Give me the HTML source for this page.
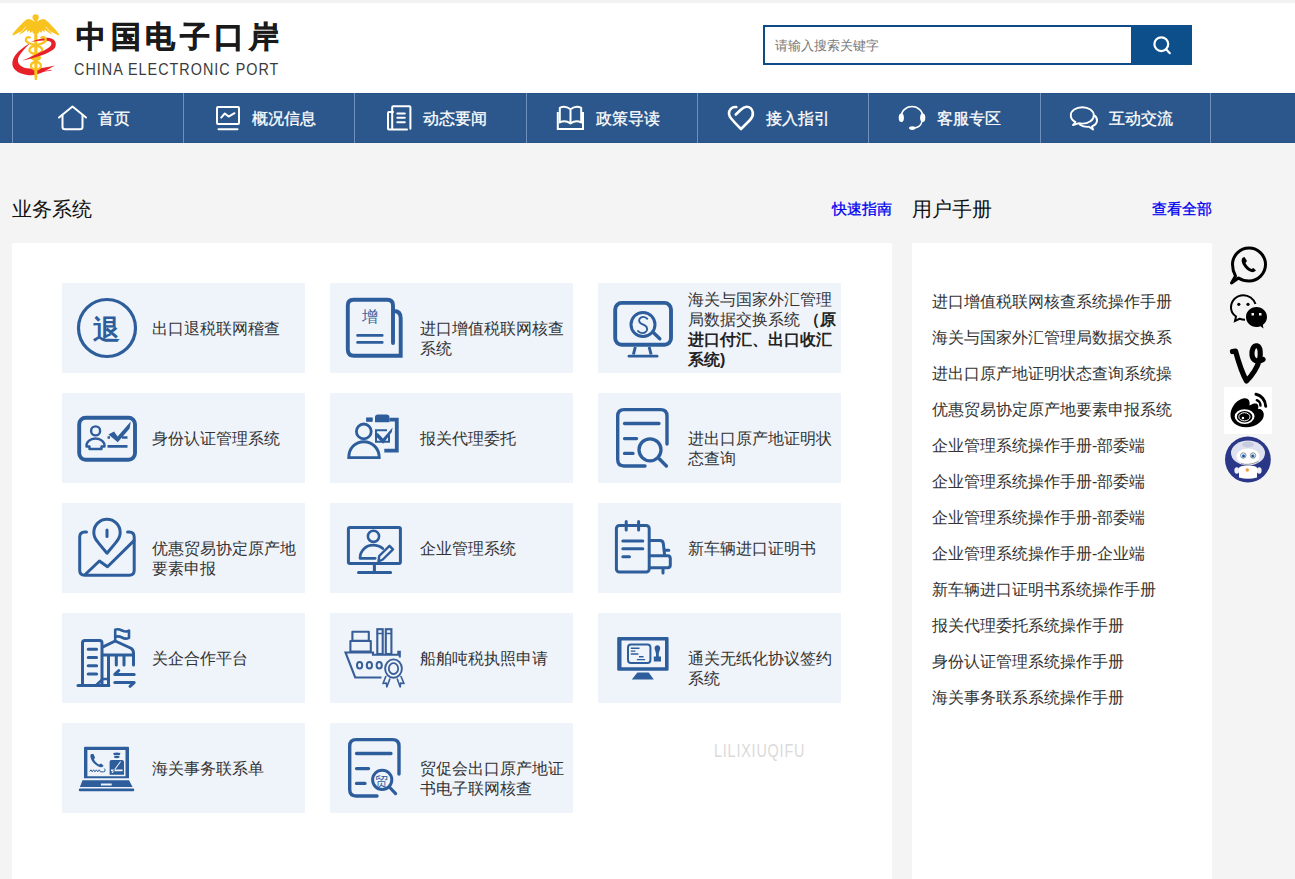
<!DOCTYPE html>
<html><head><meta charset="utf-8">
<style>
*{margin:0;padding:0;box-sizing:border-box}
html,body{width:1295px;height:879px;overflow:hidden;background:#f4f4f4;font-family:"Liberation Sans",sans-serif}
#top{position:absolute;left:0;top:0;width:1295px;height:3px;background:#f2f2f2}
#hdr{position:absolute;left:0;top:3px;width:1295px;height:90px;background:#fff}
#ltitle{position:absolute;left:76px;top:17px;font-size:30px;font-weight:bold;color:#1a1a1a;letter-spacing:4.6px;line-height:40px;white-space:nowrap;-webkit-text-stroke:0.6px #1a1a1a}
#lsub{position:absolute;left:74px;top:60px;font-size:17px;color:#3a3a3a;letter-spacing:1.2px;line-height:20px;white-space:nowrap;transform-origin:0 0;transform:scaleX(0.845)}
#search{position:absolute;left:763px;top:25px;width:429px;height:40px;border:2px solid #0d4a87;background:#fff}
#search span{position:absolute;left:10px;top:11px;font-size:13px;color:#777;line-height:16px}
#sbtn{position:absolute;left:1131px;top:25px;width:61px;height:40px;background:#0d4f8b}
#nav{position:absolute;left:0;top:93px;width:1295px;height:50px;background:#2c578c;border-top:1px solid #24508a;border-bottom:1px solid #285389}
.ni{position:absolute;top:-1px;height:50px;width:171px;border-left:1px solid #7090bb}
.nt{position:absolute;top:109px;font-size:16px;color:#fff;line-height:20px;white-space:nowrap;-webkit-text-stroke:0.3px #fff}
.h2{position:absolute;font-size:20px;color:#111;line-height:24px;white-space:nowrap}
.lnk{position:absolute;font-size:15px;color:#0000f0;line-height:18px;white-space:nowrap;-webkit-text-stroke:0.3px #0000f0}
#pl{position:absolute;left:12px;top:243px;width:880px;height:640px;background:#fff}
#pr{position:absolute;left:912px;top:243px;width:300px;height:640px;background:#fff}
.card{position:absolute;width:243px;height:90px;background:#eff4fb}
.card .t{position:absolute;left:90px;width:152px;font-size:16px;color:#333;line-height:20px}
.card b{color:#222}
.mi{position:absolute;left:932px;width:240px;overflow:hidden;font-size:16px;color:#333;line-height:20px;white-space:nowrap}
#wm{position:absolute;left:714px;top:741px;font-size:18px;letter-spacing:1px;color:#dadada;line-height:20px;white-space:nowrap;transform-origin:0 0;transform:scaleX(0.8)}
#ic{position:absolute;left:0;top:0}
</style></head><body>
<div id="top"></div>
<div id="hdr"></div>
<div id="ltitle">中国电子口岸</div>
<div id="lsub">CHINA ELECTRONIC PORT</div>
<div id="search"><span>请输入搜索关键字</span></div>
<div id="sbtn"></div>
<div id="nav">
  <div class="ni" style="left:12px"></div>
  <div class="ni" style="left:183px"></div>
  <div class="ni" style="left:354px"></div>
  <div class="ni" style="left:526px"></div>
  <div class="ni" style="left:697px"></div>
  <div class="ni" style="left:868px"></div>
  <div class="ni" style="left:1040px"></div>
  <div class="ni" style="left:1210px;width:85px"></div>
</div>
<div class="nt" style="left:98px">首页</div>
<div class="nt" style="left:252px">概况信息</div>
<div class="nt" style="left:423px">动态要闻</div>
<div class="nt" style="left:596px">政策导读</div>
<div class="nt" style="left:766px">接入指引</div>
<div class="nt" style="left:937px">客服专区</div>
<div class="nt" style="left:1109px">互动交流</div>
<div class="h2" style="left:12px;top:197px">业务系统</div>
<div class="lnk" style="left:832px;top:200px">快速指南</div>
<div class="h2" style="left:912px;top:197px">用户手册</div>
<div class="lnk" style="left:1152px;top:200px">查看全部</div>
<div id="pl"></div>
<div id="pr"></div>
<div class="card" style="left:62px;top:283px"><div class="t" style="top:36px">出口退税联网稽查</div></div>
<div class="card" style="left:330px;top:283px"><div class="t" style="top:36px">进口增值税联网核查系统</div></div>
<div class="card" style="left:598px;top:283px"><div class="t" style="top:7px">海关与国家外汇管理局数据交换系统 <b>（原进口付汇、出口收汇系统)</b></div></div>
<div class="card" style="left:62px;top:393px"><div class="t" style="top:36px">身份认证管理系统</div></div>
<div class="card" style="left:330px;top:393px"><div class="t" style="top:36px">报关代理委托</div></div>
<div class="card" style="left:598px;top:393px"><div class="t" style="top:36px">进出口原产地证明状态查询</div></div>
<div class="card" style="left:62px;top:503px"><div class="t" style="top:36px">优惠贸易协定原产地要素申报</div></div>
<div class="card" style="left:330px;top:503px"><div class="t" style="top:36px">企业管理系统</div></div>
<div class="card" style="left:598px;top:503px"><div class="t" style="top:36px">新车辆进口证明书</div></div>
<div class="card" style="left:62px;top:613px"><div class="t" style="top:36px">关企合作平台</div></div>
<div class="card" style="left:330px;top:613px"><div class="t" style="top:36px">船舶吨税执照申请</div></div>
<div class="card" style="left:598px;top:613px"><div class="t" style="top:36px">通关无纸化协议签约系统</div></div>
<div class="card" style="left:62px;top:723px"><div class="t" style="top:36px">海关事务联系单</div></div>
<div class="card" style="left:330px;top:723px"><div class="t" style="top:36px">贸促会出口原产地证书电子联网核查</div></div>

<div class="mi" style="top:292px">进口增值税联网核查系统操作手册</div>
<div class="mi" style="top:328px">海关与国家外汇管理局数据交换系统操作手册</div>
<div class="mi" style="top:364px">进出口原产地证明状态查询系统操作手册</div>
<div class="mi" style="top:400px">优惠贸易协定原产地要素申报系统操作手册</div>
<div class="mi" style="top:436px">企业管理系统操作手册-部委端</div>
<div class="mi" style="top:472px">企业管理系统操作手册-部委端</div>
<div class="mi" style="top:508px">企业管理系统操作手册-部委端</div>
<div class="mi" style="top:544px">企业管理系统操作手册-企业端</div>
<div class="mi" style="top:580px">新车辆进口证明书系统操作手册</div>
<div class="mi" style="top:616px">报关代理委托系统操作手册</div>
<div class="mi" style="top:652px">身份认证管理系统操作手册</div>
<div class="mi" style="top:688px">海关事务联系系统操作手册</div>

<div id="wm">LILIXIUQIFU</div>
<svg id="ic" width="1295" height="879" viewBox="0 0 1295 879">
<!-- logo -->
<g transform="translate(5,10)">
  <path fill="#e8202a" d="M25 33.3 C17 38 8.8 44 7.4 52 C6.6 58.5 12 64 24 65.2 C34 65.8 42 59.5 50 55.4 C41 57.6 32 59.2 24.5 58.6 C16.5 58 12.8 54.5 12.9 50 C13.2 45.5 19 39.5 25 33.3 Z"/>
  <path fill="none" stroke="#e8202a" stroke-width="0.8" d="M27 62.6 C35 61.8 42 60.8 46.5 60.2"/>
  <g fill="#f9c31f">
    <circle cx="30.6" cy="7.4" r="3.1"/>
    <path d="M30.8 13 C29 11.2 26 8.8 23.2 9 C21 9.3 19.5 11 17 13.5 C13 17.5 9.5 21.5 7.3 24.4 C7.2 25.2 8 25.4 9 24.9 C12 23.6 14 22.6 15.6 21.6 C14.6 23 14.3 24 14.9 24.5 C17 23.6 20 21.2 22.2 19.6 L22 22.3 L24.6 20.2 L25 23 L27.4 21.2 L28 23.6 L30.8 23.6 Z"/>
    <path transform="translate(61.6,0) scale(-1,1)" d="M30.8 13 C29 11.2 26 8.8 23.2 9 C21 9.3 19.5 11 17 13.5 C13 17.5 9.5 21.5 7.3 24.4 C7.2 25.2 8 25.4 9 24.9 C12 23.6 14 22.6 15.6 21.6 C14.6 23 14.3 24 14.9 24.5 C17 23.6 20 21.2 22.2 19.6 L22 22.3 L24.6 20.2 L25 23 L27.4 21.2 L28 23.6 L30.8 23.6 Z"/>
    <path d="M29.3 10 H32.4 V66 L31.9 70 H29.8 L29.3 66 Z"/>
    <ellipse cx="30.8" cy="47.8" rx="5.3" ry="3.2"/>
  </g>
  <path fill="none" stroke="#fff" stroke-width="0.7" d="M20.8 16.9 L14.4 24.2 M40.8 16.9 L47.2 24.2"/>
  <g fill="none" stroke="#f9c31f" stroke-width="2.3">
    <path d="M25.4 28.3 C24.6 26.7 21.8 26.7 21 28.8 C20.3 30.8 22 32.6 25 33.5 L30.8 35.3 L36.6 33.5 C39.6 32.6 41.3 30.8 40.6 28.8 C39.8 26.7 37 26.7 36.2 28.3"/>
    <ellipse cx="30.8" cy="39.9" rx="6.4" ry="4"/>
    <ellipse cx="30.9" cy="55.7" rx="5" ry="3.7"/>
  </g>
  <path fill="#e8202a" d="M17 50.7 C28 48.2 40.5 45 47.6 40 C52 37.2 52.2 30.4 46.4 28.4 C40.6 26.6 32 29.4 25.5 32.3 C32 30.6 39.5 29.8 44 31 C47 31.9 47.2 34.6 44.6 37 C38 41.5 28 46 17 50.7 Z"/>
  <path fill="none" stroke="#f9c31f" stroke-width="2.3" d="M36.2 28.3 C37 26.7 39.8 26.7 40.6 28.8 C41.3 30.8 39.6 32.6 36.6 33.5"/>
</g>
<!-- search icon -->
<g fill="none" stroke="#fff" stroke-width="2.2" stroke-linecap="round">
  <circle cx="1161.3" cy="44.2" r="6.9"/>
  <path d="M1166.3 49.6 L1169.8 53.2"/>
</g>
<!-- nav icons -->
<g fill="none" stroke="#fff" stroke-width="2" stroke-linecap="round" stroke-linejoin="round">
  <path d="M59 117.5 L72.5 106.5 L86 117.5"/>
  <path d="M62.5 115 V127 Q62.5 129.3 65 129.3 H80 Q82.5 129.3 82.5 127 V115"/>
  <rect x="217" y="107" width="22" height="17" rx="1"/>
  <path d="M218.5 129.3 H237.5"/>
  <path d="M221.2 117.6 L224.8 113.5 L228.6 116.6 L234.5 113.2"/>
  <path d="M392.2 128.5 V107.2 Q392.2 106.2 393.2 106.2 H409.4 Q410.4 106.2 410.4 107.2 V128.8"/>
  <path d="M393 112 H389 Q388 112 388 113 V128.5 Q388 129.5 389 129.5 H407"/>
  <path d="M397.3 113.6 H404.8 M397.3 117.8 H404.8 M397.3 122.3 H404.8"/>
  <path d="M557.8 112 V129 H583 V112" stroke-linecap="butt" stroke-linejoin="miter"/>
  <path d="M570.5 109.3 Q565 105 559.8 107.8 V122.5 Q565 119.5 570.5 123.5 Q576 119.5 581.2 122.5 V107.8 Q576 105 570.5 109.3 V123.5"/>
  <path d="M736.3 107 C731.5 106.5 728.8 110 729 113.8 C729.3 117 731.5 119.5 741 129 L750 120 C752.5 117.5 753.2 115.5 752.8 112.5 C752.3 109 749.5 106.8 746.8 106.8 C744.3 106.8 742.5 108 740.5 110 L735.8 114.5" stroke-width="2.6"/>
  <path d="M901 118 C901 111 906 106.5 912 106.5 C918 106.5 923 111 923 118" stroke-width="1.6"/>
  <path d="M922 121.5 C921 125 918.5 127.5 914.5 128" stroke-width="1.4"/>
  <path d="M1082.3 107.2 C1076 107.2 1070.8 110.8 1070.8 115.2 C1070.8 118 1072.5 120.5 1075.5 122 L1073 125 L1078.5 123.3 C1079.7 123.5 1081 123.6 1082.3 123.6 C1088.6 123.6 1093.8 120 1093.8 115.4 C1093.8 110.8 1088.6 107.2 1082.3 107.2 Z" stroke-width="1.9"/>
  <path d="M1094.5 115.5 C1096.5 117 1097.3 119 1097 121 C1096.6 123.5 1094.5 125.5 1092 126.3 L1093 129.5 L1089 126.8 C1086 127 1082.5 126.5 1080 124.7" stroke-width="1.9"/>
</g>
<g fill="#fff">
  <ellipse cx="901.3" cy="117.8" rx="2.6" ry="4.3"/>
  <ellipse cx="922.7" cy="117.8" rx="2.6" ry="4.3"/>
  <ellipse cx="912.3" cy="128.1" rx="3.3" ry="1.8"/>
</g>
<!-- cards -->
<g fill="none" stroke="#2e5d9c" stroke-linecap="round" stroke-linejoin="round">
  <g transform="translate(62,283)">
    <circle cx="45" cy="45" r="28.5" stroke-width="3.2"/>
  </g>
  <g transform="translate(330,283)">
    <path d="M63 60 V22.5 Q63 16.8 57.3 16.8 H23.5 Q17.8 16.8 17.8 22.5 V66.5 Q17.8 72.7 24 72.7 H70.7 V35 Q70.7 28.5 64.5 28" stroke-width="3.9" stroke-linejoin="miter"/>
    <path d="M27.5 52.4 H52.3 M27.5 59.4 H52.3" stroke-width="2.6"/>
  </g>
  <g transform="translate(598,283)">
    <rect x="17.2" y="19.9" width="55.8" height="41.8" rx="6.5" stroke-width="3.9"/>
    <path d="M37.3 64 L35.4 71.5 M51.2 64 L53.1 71.5" stroke-width="3" stroke-linecap="butt"/>
    <path d="M31 73.2 H59" stroke-width="2.8"/>
    <circle cx="45" cy="41.5" r="12" stroke-width="3"/>
    <path d="M55.3 49.5 L61.8 55.8" stroke-width="3.4"/>
  </g>
  <g transform="translate(62,393)">
    <rect x="17.2" y="24.7" width="55.8" height="42.1" rx="6.5" stroke-width="3.9"/>
    <circle cx="33.6" cy="37.9" r="4.5" stroke-width="2.4"/>
    <path d="M27.5 56 V53.5 H24.5 C24 49 28 45.5 33.5 45.5 C39 45.5 43 49 42.5 53.5 H39.5 V56 Z" stroke-width="2.4"/>
    <path d="M45.5 44.5 H48 M60 44.5 H65.5 M45.5 53.4 H65.5" stroke-width="2.6" stroke-linecap="butt"/>
  </g>
  <g transform="translate(330,393)">
    <circle cx="33.8" cy="38.4" r="7.4" stroke-width="2.8"/>
    <path d="M18.8 64.6 C18.8 55 25.5 48.8 33.8 48.8 C42.1 48.8 49.2 55 49.2 64.6 Z" stroke-width="2.9" stroke-linejoin="miter"/>
    <path d="M57 37.3 H46 V48.7 H59 V42" stroke-width="2" stroke-linecap="butt" stroke-linejoin="miter"/>
    <path d="M42.5 26.6 H36.3 M59.4 26.6 H66.8 V57.6 H54.3" stroke-width="3.8" stroke-linecap="butt" stroke-linejoin="miter"/>
  </g>
  <g transform="translate(598,393)">
    <path d="M69 51 V23 Q69 16.6 62.6 16.6 H26 Q19.7 16.6 19.7 23 V66.6 Q19.7 73 26 73 H47" stroke-width="3.4"/>
    <path d="M26.5 30.5 H61 M26.5 45.6 H38.6 M26.5 60.4 H35" stroke-width="3.3"/>
    <circle cx="52" cy="56.8" r="11" stroke-width="3.3"/>
    <path d="M61.2 65.8 L68.4 73" stroke-width="3.4"/>
  </g>
  <g transform="translate(62,503)">
    <path d="M24.5 29 H22.7 Q17.7 29 17.7 34 V67.2 Q17.7 72.2 22.7 72.2 H67.2 Q72.2 72.2 72.2 67.2 V34 Q72.2 29 67.2 29 H65.6" stroke-width="3"/>
    <path d="M45 50.2 L36.2 39.6 C33.5 36.5 31.8 33.5 31.8 29.5 C31.8 22.2 37.7 16.3 45 16.3 C52.3 16.3 58.2 22.2 58.2 29.5 C58.2 33.5 56.5 36.5 53.8 39.6 Z" stroke-width="3"/>
    <path d="M45 27 V33.5" stroke-width="3"/>
    <path d="M23.2 71.5 L37.4 58 L45.5 63.8 L72 37.6" stroke-width="3"/>
  </g>
  <g transform="translate(330,503)">
    <rect x="18.4" y="24.5" width="52" height="36" rx="1.5" stroke-width="3"/>
    <path d="M44.4 62 V69.6 M28.5 69.6 H60.6" stroke-width="3"/>
    <circle cx="43.5" cy="33.3" r="5.6" stroke-width="2.6"/>
    <path d="M45.2 55.3 H30 C30 47.8 35.8 42.2 43 42.2 C47 42.2 50.5 43.6 52.8 45.6" stroke-width="2.7"/>
    <path d="M48.5 58.5 L49.2 53 L59.5 42.8 L63 46.3 L52.8 56.5 Z" stroke-width="2.4"/>
  </g>
  <g transform="translate(598,503)">
    <rect x="18.4" y="22.5" width="32.8" height="46.6" rx="3" stroke-width="3"/>
    <path d="M28.2 18.5 V27 M40.6 18.5 V27" stroke-width="3"/>
    <path d="M24.8 37.9 H44.8 M24.8 45.8 H44.8 M24.8 53.8 H31.5" stroke-width="3"/>
    <path d="M51.5 37.6 H62 Q64.8 37.6 65.3 40.5 L66.6 51.8" stroke-width="3"/>
    <path d="M51.5 52.8 H69.5 Q72.3 52.8 72.3 55.6 V62 Q72.3 64.8 69.5 64.8 H51.5" stroke-width="3"/>
    <path d="M67.2 47.2 H70.8 M65 65.5 V70" stroke-width="3"/>
  </g>
  <g transform="translate(62,613)">
    <path d="M20.5 72.5 V30 Q20.5 27.6 23 27.6 H37.5 Q40 27.6 40 30 V72.5" stroke-width="3"/>
    <path d="M16 72.5 H46.8" stroke-width="3"/>
    <path d="M26.2 36.3 H34.6 M26.2 44.5 H34.6 M26.2 52.7 H34.6 M26.2 60.9 H34.6" stroke-width="3"/>
    <path d="M41 33.8 L53.2 28 L68.5 35 Q71.5 36.5 71.5 40 V52" stroke-width="3"/>
    <path d="M41 42 H70.5 M46.5 42 V72.5 M54.3 43 V52 M62 43 V52" stroke-width="3"/>
    <path d="M34.3 72 L40.8 66 H46" stroke-width="2.5"/>
    <path d="M53.2 28 V16.6 Q56 15.5 60 17.5 Q64 19.5 67 17.5 V24.8 Q63.5 26.5 60 24.5 Q56 22.5 53.2 24" stroke-width="2.6"/>
    <path d="M72.2 61.4 H52.8 L56.8 57.5 M52.8 69.6 H72.2 L68 73.3" stroke-width="3"/>
  </g>
  <g transform="translate(330,613)" stroke="#385e98">
    <path d="M51.5 64.5 H25.2 L15.5 39.5 H43 V41.8 H68.3 V38.8 H69.8 V44.5" stroke-width="2.1" stroke-linecap="butt" stroke-linejoin="miter"/>
    <rect x="20.4" y="28" width="20.4" height="10.6" stroke-width="2.1"/>
    <rect x="22.4" y="18.7" width="16.4" height="9" stroke-width="2.1"/>
    <rect x="47.3" y="16.2" width="5.4" height="24.8" stroke-width="2.1" stroke-linejoin="miter"/>
    <rect x="55.8" y="16.2" width="5.6" height="24.8" stroke-width="2.1" stroke-linejoin="miter"/>
    <path d="M47.3 20.5 H52.7 M55.8 20.5 H61.4" stroke-width="1.6"/>
    <ellipse cx="29.6" cy="52.2" rx="2.6" ry="3.3" stroke-width="2"/>
    <ellipse cx="39.4" cy="52.2" rx="2.6" ry="3.3" stroke-width="2"/>
    <ellipse cx="49.2" cy="52.2" rx="2.6" ry="3.3" stroke-width="2"/>
    <ellipse cx="63.5" cy="55.6" rx="8.4" ry="9.2" stroke-width="1.9"/>
    <ellipse cx="63.5" cy="55.6" rx="4.7" ry="5.4" stroke-width="1.8"/>
    <path d="M55.8 63.5 L53 70.5 L56.3 70 L56.8 74 L59.8 66" stroke-width="1.6"/>
    <path d="M71 63.5 L74 70.5 L70.7 70 L70.2 74 L67.3 66" stroke-width="1.6"/>
  </g>
</g>
<g fill="#2e5d9c">
  <text x="106.5" y="339" font-size="27" font-weight="bold" text-anchor="middle" font-family="Liberation Sans, sans-serif">退</text>
  <text x="369.5" y="322" font-size="16" text-anchor="middle" font-family="Liberation Sans, sans-serif" fill="#3a64a0">增</text>
  <path transform="translate(598,283)" fill="none" stroke="#2e5d9c" stroke-width="1.9" stroke-linecap="round" d="M49.3 35.8 C47.8 33.9 44.8 33.5 42.8 34.6 C40.3 36 40.6 39.2 43.2 40.6 L46.8 42.4 C49.8 44 50 47.8 47.2 49.3 C44.7 50.6 41.6 50 40 48"/>
  <path transform="translate(62,393)" d="M46.4 41.6 L52 38.4 L55.6 43.6 L68.8 28.4 L67.6 35.5 L55.8 49.3 Z"/>
  <g transform="translate(330,393)">
    <rect x="36.3" y="24.6" width="6.2" height="4.1"/>
    <path d="M45 29.2 V24 Q45 21.5 48 21.5 H56.5 Q59.4 21.5 59.4 24 V29.2 Z"/>
    <path d="M44.6 42 L47.8 40 L53 45.6 L62.6 34.4 L61.8 39 L53.2 50.8 Z"/>
  </g>
  <text x="381.5" y="786" font-size="13" text-anchor="middle" font-family="Liberation Sans, sans-serif">贸</text>
  <g transform="translate(598,613)">
    <path fill-rule="evenodd" d="M20.5 24 H69.3 Q70.6 24 70.6 25.3 V56.5 Q70.6 57.8 69.3 57.8 H20.5 Q19.2 57.8 19.2 56.5 V25.3 Q19.2 24 20.5 24 Z M23.5 27.6 V54.3 H67 V27.6 Z"/>
    <path d="M39.4 59.4 H50.7 L55.8 66.5 H33.8 Z"/>
    <path d="M59.4 32.3 C57.6 32.3 56.4 33.8 56.6 35.6 C56.8 37.5 58 39 58 41 V43.5 H55.8 V48.6 H63 V43.5 H60.8 V41 C60.8 39 62 37.5 62.2 35.6 C62.4 33.8 61.2 32.3 59.4 32.3 Z"/>
  </g>
  <g transform="translate(62,723)">
    <path fill-rule="evenodd" d="M23 23.8 H66 Q67 23.8 67 24.8 V55.3 H22 V24.8 Q22 23.8 23 23.8 Z M25.4 27.1 V53.2 H63.5 V27.1 Z"/>
    <path fill-rule="evenodd" d="M20.5 57.3 H67 L70.6 64 H17.9 Z M38.9 60.4 V62.5 H49.7 V60.4 Z"/>
    <rect x="16.9" y="65.4" width="55.3" height="2.8" rx="1"/>
    <path d="M29.5 31 C28 31.5 28 34 29.5 37 C31.5 40.5 34.5 43 37.8 44 C39.5 44.5 41.5 44 41.5 42.5 L39 40.5 L37 41.5 C35 40.5 33 38.5 32 36.5 L33 34.5 L31.5 31 Z"/>
    <path d="M27.6 48.5 L29 46.8 L30.2 48.8 L31.6 46.8 L33 48.8 L34.4 46.8 L35.8 48.8 L37.2 46.8 L38.5 48.8 H41.5 Q43.5 48.8 43 46.5 L42.3 45.5" fill="none" stroke="#2e5d9c" stroke-width="1"/>
    <path d="M51.2 30 Q54.8 28.8 58.4 30 L57.8 32 H51.8 Z"/>
    <path d="M52.2 32.8 H57.4 V34.8 Q54.8 35.6 52.2 34.8 Z"/>
    <path fill-rule="evenodd" d="M49.5 36.9 H60 Q62 36.9 62 39 V51.7 H47.6 V39 Q47.6 36.9 49.5 36.9 Z M58 38.5 L49.5 50 H50.8 L59.2 38.5 Z M49 46.5 V48.2 H60.6 V46.5 Z"/>
  </g>
</g>
<g transform="translate(598,613)" fill="none" stroke="#2e5d9c">
  <rect x="30" y="31.5" width="22.4" height="18.5" rx="3" stroke-width="2"/>
  <path d="M32.8 35.3 H41.5 M32.8 38.1 H37.4 M32.8 41 H40.4 M41 43.8 H45.6 M38.9 46.6 H47.1" stroke-width="1.4"/>
</g>
<g transform="translate(330,723)" fill="none" stroke="#2e5d9c" stroke-linecap="round">
  <path d="M69 51 V23 Q69 16.6 62.6 16.6 H26 Q19.7 16.6 19.7 23 V66.6 Q19.7 73 26 73 H47" stroke-width="3.4"/>
  <path d="M26.5 30.5 H61 M26.5 45.6 H38.6 M26.5 60.4 H35" stroke-width="3.3"/>
  <circle cx="52.2" cy="56.8" r="9.6" stroke-width="3"/>
  <path d="M59.3 64 L65.6 70.6" stroke-width="3.2"/>
</g>
<!-- side icons -->
<g fill="none" stroke="#000" stroke-width="3">
  <path d="M1235.5 276 C1233.5 272.5 1232.5 268.5 1232.5 264.5 C1232.5 255.5 1240 248 1249 248 C1258 248 1265.5 255.5 1265.5 264.5 C1265.5 273.5 1258 281 1249 281 C1245 281 1241.5 280 1238.5 278 L1231.5 283 Z" stroke-linejoin="round"/>
</g>
<path fill="#000" d="M1243 257.5 C1241.5 258.5 1241 261 1242.5 264 C1244.5 268 1248 271 1251.5 272 C1253.5 272.5 1255 271.5 1256 270.5 L1253.5 268 L1251.5 269 C1249 268 1246.5 265.5 1245.5 263 L1247 261 L1244.5 257 Z"/>
<g>
  <path fill="none" stroke="#000" stroke-width="2" d="M1255.5 304 C1253.5 298.5 1248.5 295.2 1243.5 295.2 C1236.5 295.2 1231 300.5 1231 307.5 C1231 311.5 1233 314.5 1236 316.5 L1235 321 L1239.5 318.8 C1241 319.3 1243 319.8 1245 319.8"/>
  <circle cx="1238.8" cy="304.3" r="1.6" fill="#000"/>
  <circle cx="1248" cy="304.3" r="1.6" fill="#000"/>
  <path fill="#000" d="M1256.5 307 C1250.5 307 1246 311.5 1246 317 C1246 322.5 1250.5 327 1256.5 327 C1258 327 1259.5 326.7 1260.5 326.2 L1263.5 328.5 L1262.8 325 C1265.5 323 1267 320 1267 317 C1267 311.5 1262.5 307 1256.5 307 Z"/>
  <rect x="1251.5" y="313" width="2.5" height="2.5" fill="#f4f4f4"/>
  <rect x="1259" y="313" width="2.5" height="2.5" fill="#f4f4f4"/>
</g>
<path fill="none" stroke="#000" stroke-width="5.2" stroke-linecap="round" stroke-linejoin="round" d="M1232.5 351.5 L1235.5 351 C1238.5 362 1241.5 372 1246.5 381 C1252 375.5 1257 368 1259.5 360 C1261 354 1260.5 346.5 1257 345.8 C1253.5 345.2 1251.5 350 1252 355 C1252.6 360.5 1257.5 363 1263 359.5"/>
<rect x="1224" y="387" width="48" height="47" fill="#fff"/>
<g>
  <path fill="#000" d="M1244 398.3 C1237 399.3 1231 407 1230.5 414 C1230 421.5 1236.5 427.2 1246 427.2 C1256 427.2 1264 421 1263.8 414.5 C1263.6 410.5 1260.5 408.5 1258 409.2 C1259 405.5 1258 403 1254.5 403.5 C1252.5 403.8 1250.5 405 1249.5 405.5 C1250.3 401 1248.5 397.8 1244 398.3 Z"/>
  <ellipse cx="1244.6" cy="416.6" rx="9.9" ry="7.4" fill="#fff"/>
  <ellipse cx="1244.6" cy="416.8" rx="7.8" ry="5.7" fill="#000"/>
  <ellipse cx="1244.4" cy="416.8" rx="5.6" ry="4.1" fill="none" stroke="#fff" stroke-width="1"/>
  <circle cx="1242.9" cy="418" r="1.2" fill="#fff"/>
  <path fill="none" stroke="#000" stroke-width="3" stroke-linecap="round" d="M1256 394.2 C1261.2 395.2 1265.4 400 1265.7 406.3"/>
  <path fill="none" stroke="#000" stroke-width="2.4" stroke-linecap="round" d="M1256.8 400.2 C1259 401 1260.4 403 1260.5 405.6"/>
</g>
<circle cx="1247.9" cy="459.5" r="22.9" fill="#2a3788"/>
<g>
  <ellipse cx="1248" cy="453" rx="17" ry="12.5" fill="#dfe2ee"/>
  <ellipse cx="1248" cy="444.5" rx="6" ry="3" fill="#c7cbdf"/>
  <ellipse cx="1248" cy="456.3" rx="11.5" ry="7.8" fill="#fff"/>
  <circle cx="1243.3" cy="455.5" r="2.7" fill="#fff" stroke="#444" stroke-width="0.6"/>
  <circle cx="1253" cy="455.5" r="2.7" fill="#fff" stroke="#444" stroke-width="0.6"/>
  <circle cx="1243.5" cy="456" r="1.8" fill="#3f86d2"/>
  <circle cx="1252.8" cy="456" r="1.8" fill="#3f86d2"/>
  <circle cx="1243.5" cy="456" r="0.8" fill="#13255e"/>
  <circle cx="1252.8" cy="456" r="0.8" fill="#13255e"/>
  <path d="M1241 463.6 Q1248 466 1258.5 461.5" fill="none" stroke="#666" stroke-width="0.6"/>
  <path d="M1239 468 Q1239 465.5 1248 465.5 Q1257 465.5 1257 468 V477.5 Q1248 480 1239 477.5 Z" fill="#fff"/>
  <ellipse cx="1236.8" cy="470.5" rx="2.4" ry="3.2" fill="#eef0f6"/>
  <ellipse cx="1259.2" cy="470.5" rx="2.4" ry="3.2" fill="#eef0f6"/>
  <circle cx="1247.3" cy="470" r="1.7" fill="#f59b3b"/>
</g>
</svg>

</body></html>
